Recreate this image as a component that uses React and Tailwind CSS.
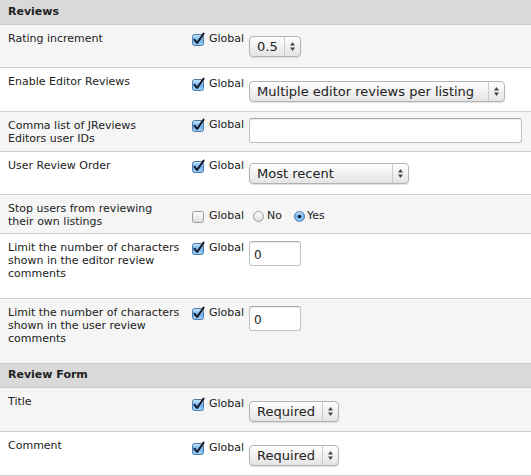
import { useId } from 'react'

function Checkbox({ checked = true }) {
  const id = useId()
  return (
    <svg width="13" height="13" viewBox="0 0 13 13" className="shrink-0 overflow-visible">
      <defs>
        <linearGradient id={id} x1="0" y1="0" x2="0" y2="1">
          {checked ? (
            <>
              <stop offset="0" stopColor="#cfe8fc" />
              <stop offset="0.5" stopColor="#6db2ef" />
              <stop offset="1" stopColor="#9fd0f7" />
            </>
          ) : (
            <>
              <stop offset="0" stopColor="#ffffff" />
              <stop offset="1" stopColor="#dcdcdc" />
            </>
          )}
        </linearGradient>
      </defs>
      <rect x="0.5" y="1.5" width="11" height="11" rx="2" fill={`url(#${id})`} stroke={checked ? '#4f7aa6' : '#9b9b9b'} />
      {checked && <path d="M2.6 6.8 L5.1 10 L11.6 0.6" fill="none" stroke="#15151f" strokeWidth="1.9" strokeLinecap="round" strokeLinejoin="round" />}
    </svg>
  )
}

function Radio({ checked = false }) {
  const id = useId()
  return (
    <svg width="11" height="11" viewBox="0 0 11 11" className="shrink-0">
      <defs>
        <linearGradient id={id} x1="0" y1="0" x2="0" y2="1">
          {checked ? (
            <>
              <stop offset="0" stopColor="#cfe8fc" />
              <stop offset="0.5" stopColor="#6db2ef" />
              <stop offset="1" stopColor="#9fd0f7" />
            </>
          ) : (
            <>
              <stop offset="0" stopColor="#ffffff" />
              <stop offset="1" stopColor="#dcdcdc" />
            </>
          )}
        </linearGradient>
      </defs>
      <circle cx="5.5" cy="5.5" r="5" fill={`url(#${id})`} stroke={checked ? '#4f7aa6' : '#9b9b9b'} />
      {checked && <circle cx="5.5" cy="5.5" r="1.7" fill="#15151f" />}
    </svg>
  )
}

function Global({ checked = true }) {
  return (
    <div className="flex items-center h-[13px] shrink-0">
      <Checkbox checked={checked} />
      <span className="ml-[4px]">Global</span>
    </div>
  )
}

function Select({ value, width }) {
  return (
    <div
      className="ml-[5px] mt-[3px] h-[21px] flex items-stretch rounded-[4px] border border-[#b3b3b3] bg-gradient-to-b from-white to-[#e4e4e4] shadow-[0_1px_1px_rgba(0,0,0,0.12)] text-[13px] text-[#222]"
      style={{ width }}
    >
      <div className="flex-1 flex items-center pl-[7px] pt-[1px] whitespace-nowrap overflow-hidden">{value}</div>
      <div className="w-[16px] border-l border-[#cbcbcb] flex items-center justify-center">
        <svg width="7" height="11" viewBox="0 0 7 11">
          <path d="M3.5 1 L6 4.5 L1 4.5 Z" fill="#444" />
          <path d="M1 6.5 L6 6.5 L3.5 10 Z" fill="#444" />
        </svg>
      </div>
    </div>
  )
}

function TextInput({ value = '', width }) {
  return (
    <div
      className="ml-[5px] -mt-[1px] h-[25px] rounded-[3px] border border-[#c2c2c2] border-t-[#a9a9a9] bg-white shadow-[inset_0_1px_1px_rgba(0,0,0,0.08)] pl-[4px] pt-[7px] text-[12px] leading-[13px] text-[#222]"
      style={{ width }}
    >
      {value}
    </div>
  )
}

function Row({ label, gray, height, pt, children }) {
  return (
    <div
      className={`flex border-b border-[#cfcfcf] ${gray ? 'bg-[#f5f5f5]' : 'bg-white'}`}
      style={{ height }}
    >
      <div className="w-[192px] shrink-0 pl-2 pt-[7px] leading-[13px] whitespace-nowrap">{label}</div>
      <div className="flex items-start" style={{ paddingTop: pt }}>
        {children}
      </div>
    </div>
  )
}

function Header({ title, height }) {
  return (
    <div className="bg-[#d9d9d9] border-b border-[#c9c9c9] pl-2 flex items-center font-bold" style={{ height }}>
      {title}
    </div>
  )
}

export default function App() {
  return (
    <div className="w-[531px] h-[476px] overflow-hidden bg-white text-[11px] text-[#222] font-['DejaVu_Sans',Verdana,sans-serif]">
      <Header title="Reviews" height={25} />
      <Row label="Rating increment" gray height={43} pt={8}>
        <Global />
        <Select value="0.5" width={52} />
      </Row>
      <Row label="Enable Editor Reviews" height={44} pt={10}>
        <Global />
        <Select value="Multiple editor reviews per listing" width={256} />
      </Row>
      <Row label={<>Comma list of JReviews<br />Editors user IDs</>} gray height={40} pt={7}>
        <Global />
        <TextInput width={273} />
      </Row>
      <Row label="User Review Order" height={43} pt={8}>
        <Global />
        <Select value="Most recent" width={160} />
      </Row>
      <Row label={<>Stop users from reviewing<br />their own listings</>} gray height={39} pt={15}>
        <Global checked={false} />
        <div className="flex items-center h-[13px] ml-[9px]">
          <Radio />
          <span className="ml-[3px]">No</span>
          <div className="ml-[12px] flex items-center">
            <Radio checked />
          </div>
          <span className="ml-[2px]">Yes</span>
        </div>
      </Row>
      <Row label={<>Limit the number of characters<br />shown in the editor review<br />comments</>} height={65} pt={8}>
        <Global />
        <TextInput value="0" width={52} />
      </Row>
      <Row label={<>Limit the number of characters<br />shown in the user review<br />comments</>} gray height={65} pt={8}>
        <Global />
        <TextInput value="0" width={52} />
      </Row>
      <Header title="Review Form" height={24} />
      <Row label="Title" gray height={44} pt={10}>
        <Global />
        <Select value="Required" width={90} />
      </Row>
      <Row label="Comment" height={44} pt={10}>
        <Global />
        <Select value="Required" width={90} />
      </Row>
    </div>
  )
}
